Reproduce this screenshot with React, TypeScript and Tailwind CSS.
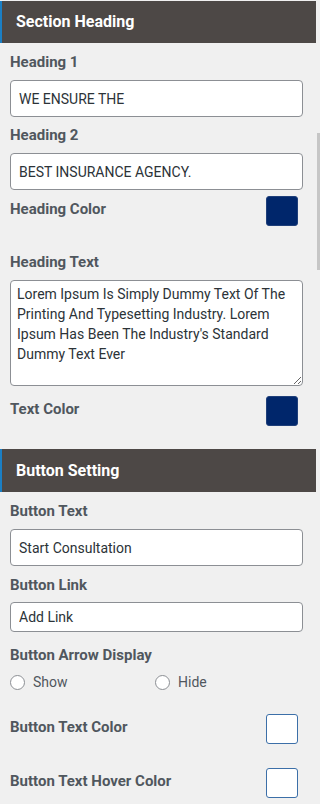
import React from 'react';

const labelCls = "h-[20px] leading-[20px] text-[15px] font-bold text-[#50575e]";
const inputCls =
  "block w-full rounded-[4px] border border-[#8c8f94] bg-white px-[8px] text-[14px] text-[#2c3338] outline-none";

function SectionHeader({ title, className = '' }: { title: string; className?: string }) {
  return (
    <div
      className={`flex items-center border-l-2 border-[#1b7fc4] bg-[#4d4846] pl-[14px] text-[16px] font-bold text-white ${className}`}
    >
      {title}
    </div>
  );
}

function Swatch({ color }: { color: 'navy' | 'white' }) {
  return color === 'navy' ? (
    <div className="mr-[5px] h-[30px] w-[32px] rounded-[3px] border border-[#1f3f7a] bg-[#00266b]" />
  ) : (
    <div className="mr-[5px] h-[30px] w-[32px] rounded-[3px] border border-[#3c6fa8] bg-white" />
  );
}

function Radio({ label }: { label: string }) {
  return (
    <label className="flex items-center gap-[8px] text-[14px] text-[#50575e]">
      <span className="h-[15px] w-[15px] rounded-full border border-[#8c8f94] bg-white" />
      {label}
    </label>
  );
}

export default function App() {
  return (
    <div className="relative h-[804px] w-[320px] overflow-hidden bg-[#f0f0f0] font-['Roboto',sans-serif]">
      <div className="w-[316px] pt-px">
        <SectionHeader title="Section Heading" className="h-[42px]" />

        <div className="pl-[10px] pr-[13px]">
          <div className={`mt-[9px] ${labelCls}`}>Heading 1</div>
          <input readOnly value="WE ENSURE THE" className={`mt-[8px] h-[37px] ${inputCls}`} />

          <div className={`mt-[8px] ${labelCls}`}>Heading 2</div>
          <input readOnly value="BEST INSURANCE AGENCY." className={`mt-[8px] h-[37px] ${inputCls}`} />

          <div className="mt-[6px] flex items-start justify-between">
            <div className={`mt-[3px] ${labelCls}`}>Heading Color</div>
            <Swatch color="navy" />
          </div>

          <div className={`mt-[26px] ${labelCls}`}>Heading Text</div>
          <textarea
            readOnly
            defaultValue="Lorem Ipsum Is Simply Dummy Text Of The Printing And Typesetting Industry. Lorem Ipsum Has Been The Industry's Standard Dummy Text Ever"
            className="mt-[8px] block h-[106px] w-full rounded-[4px] border border-[#8c8f94] bg-white px-[6px] pt-[3px] text-[14px] leading-[20px] text-[#2c3338] outline-none"
          />

          <div className="mt-[10px] flex items-start justify-between">
            <div className={`mt-[3px] ${labelCls}`}>Text Color</div>
            <Swatch color="navy" />
          </div>
        </div>

        <SectionHeader title="Button Setting" className="mt-[23px] h-[43px]" />

        <div className="pl-[10px] pr-[13px]">
          <div className={`mt-[9px] ${labelCls}`}>Button Text</div>
          <input readOnly value="Start Consultation" className={`mt-[8px] h-[37px] ${inputCls}`} />

          <div className={`mt-[9px] ${labelCls}`}>Button Link</div>
          <input readOnly value="Add Link" className={`mt-[7px] h-[30px] ${inputCls}`} />

          <div className={`mt-[13px] ${labelCls}`}>Button Arrow Display</div>
          <div className="mt-[7px] flex h-[20px] items-center">
            <div className="w-[145px]">
              <Radio label="Show" />
            </div>
            <Radio label="Hide" />
          </div>

          <div className="mt-[22px] flex items-start justify-between">
            <div className={`mt-[3px] ${labelCls}`}>Button Text Color</div>
            <Swatch color="white" />
          </div>

          <div className="mt-[24px] flex items-start justify-between">
            <div className={`mt-[3px] ${labelCls}`}>Button Text Hover Color</div>
            <Swatch color="white" />
          </div>
        </div>
      </div>

      {/* scrollbar thumb */}
      <div className="absolute right-0 top-[133px] h-[137px] w-[3px] bg-[#c6c6c6]" />
    </div>
  );
}
